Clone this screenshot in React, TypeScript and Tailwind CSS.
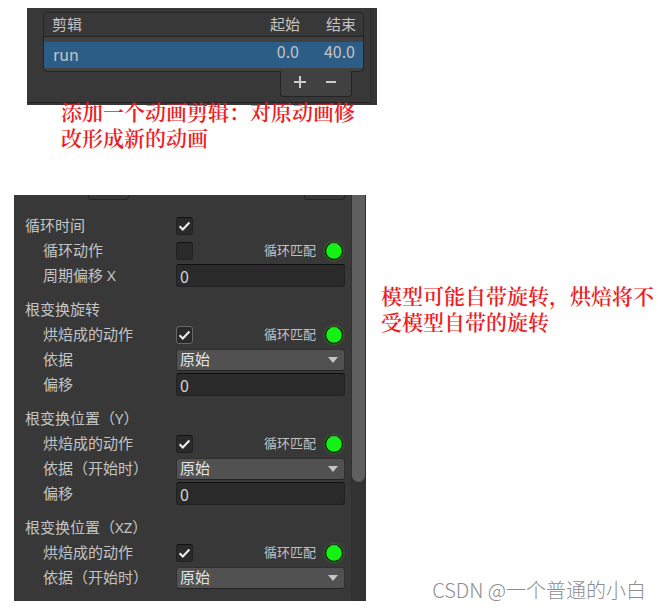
import { ReactNode, useState } from "react";

type CheckProps = { id: string; checked: boolean; focused?: boolean };

const Check = ({ id, checked, focused }: CheckProps) => {
  const [value, setValue] = useState(checked);

  return (
    <span className="grid shrink-0">
      <input
        id={id}
        type="checkbox"
        checked={value}
        onChange={(e) => setValue(e.target.checked)}
        className={`col-start-1 row-start-1 h-[18px] w-[17px] appearance-none rounded-[3px] border bg-[#2a2a2a] ${
          focused ? "border-[#686868]" : "border-[#212121] border-t-[#111111]"
        }`}
      />
      {value && (
        <svg
          viewBox="0 0 17 18"
          className="pointer-events-none col-start-1 row-start-1 h-[18px] w-[17px]"
          fill="none"
          stroke="#eeeeee"
          strokeWidth="2"
        >
          <path d="M3.6 9.3 6.8 12.5 13.4 5.5" />
        </svg>
      )}
    </span>
  );
};

const MatchLight = () => (
  <div className="mr-px ml-auto flex items-center gap-2 text-[13px] text-[#c0c0c0]">
    <span>循环匹配</span>
    <svg viewBox="0 0 20 20" className="size-5 overflow-visible">
      <circle cx="10" cy="10" r="11" fill="#2fd010" opacity="0.08" />
      <circle cx="10" cy="10" r="10" fill="#2fd010" opacity="0.16" />
      <circle cx="10" cy="10" r="9" fill="#0b1f09" />
      <circle cx="10" cy="10" r="7.8" fill="#12f512" />
      <path
        d="M10 4v6L6 14M10 10l4 4M10 12l-2.5 3M10 12l2.5 3"
        stroke="#2bd92b"
        strokeWidth="0.6"
        fill="none"
      />
      <path d="M6 3.2A7.8 7.8 0 0 1 14 3.2" stroke="#6fae6c" strokeWidth="0.8" fill="none" />
    </svg>
  </div>
);

const Row = ({ id, label, children }: { id: string; label: string; children: ReactNode }) => (
  <div className="flex h-[25px] items-center">
    <label htmlFor={id} className="w-[133px] shrink-0 whitespace-nowrap">
      {label}
    </label>
    <div className="flex min-w-0 flex-1 items-center">{children}</div>
  </div>
);

const NumberField = ({ id }: { id: string }) => (
  <input
    id={id}
    type="text"
    defaultValue="0"
    className="h-[23px] w-full rounded-[3px] border border-[#212121] border-t-[#0f0f0f] bg-[#2a2a2a] px-[3px] font-['Noto_Sans_CJK_SC',sans-serif] text-base leading-5 text-[#d2d2d2]"
  />
);

const BasisSelect = ({ id }: { id: string }) => (
  <div className="grid w-full items-center">
    <select
      id={id}
      className="col-start-1 row-start-1 h-[22px] w-full appearance-none rounded-[3px] border border-[#303030] border-b-[#242424] bg-[#515151] px-[3px] pb-px leading-[18px] text-[#e4e4e4]"
    >
      <option>原始</option>
    </select>
    <svg
      viewBox="0 0 10 6"
      className="pointer-events-none col-start-1 row-start-1 mr-[7px] h-[6px] w-[10px] justify-self-end"
    >
      <path d="M0 0h10L5 6z" fill="#c4c4c4" />
    </svg>
  </div>
);

type GroupProps = { id: string; title: string; basis: string; focused?: boolean; offset?: boolean };

const RootGroup = ({ id, title, basis, focused, offset }: GroupProps) => (
  <fieldset>
    <legend className="h-[25px] leading-[25px]">{title}</legend>
    <div className="pl-[18px]">
      <Row id={`${id}-bake`} label="烘焙成的动作">
        <Check id={`${id}-bake`} checked focused={focused} />
        <MatchLight />
      </Row>
      <Row id={`${id}-basis`} label={basis}>
        <BasisSelect id={`${id}-basis`} />
      </Row>
      {offset && (
        <Row id={`${id}-offset`} label="偏移">
          <NumberField id={`${id}-offset`} />
        </Row>
      )}
    </div>
  </fieldset>
);

const ClipList = () => (
  <section className="flex h-[97px] w-full max-w-[350px] bg-[#383838] text-[15px] text-[#c4c4c4]">
    <div className="mb-[2px] flex-1 border-b border-[#222222] pt-1 pr-[6px] pl-4">
      <div className="rounded-[4px] border border-[#242424] bg-[#414141] pb-[3px]">
        <table className="w-full table-fixed border-separate border-spacing-0">
          <thead>
            <tr className="h-6 bg-[#383838] leading-[23px]">
              <th className="rounded-tl-[4px] border-b border-[#242424] p-0 pl-2 text-left font-normal">剪辑</th>
              <th className="w-[62px] border-b border-[#242424] p-0 pr-[7px] text-right font-normal">起始</th>
              <th className="w-[56px] rounded-tr-[4px] border-b border-[#242424] p-0 pr-[7px] text-right font-normal">
                结束
              </th>
            </tr>
          </thead>
          <tbody className="font-['Noto_Sans_CJK_SC',sans-serif] text-base">
            <tr className="h-[31px] bg-[#2c5d87]">
              <td className="border-t-[5px] border-[#414141] p-0 pb-[2px] pl-[9px] leading-6">run</td>
              <td className="border-t-[5px] border-[#414141] p-0 pr-2 pb-2 text-right leading-[18px]">0.0</td>
              <td className="border-t-[5px] border-[#414141] p-0 pr-2 pb-2 text-right leading-[18px]">40.0</td>
            </tr>
          </tbody>
        </table>
      </div>
      <div className="-mt-px mr-3 ml-auto flex h-[26px] w-[72px] items-center justify-center gap-[18px] rounded-b-[4px] border border-t-0 border-[#242424] bg-[#414141] pr-[2px] pb-1">
        <button type="button" aria-label="添加">
          <svg viewBox="0 0 14 14" className="size-[14px]" stroke="#cccccc" strokeWidth="2">
            <path d="M7 1v12M1 7h12" />
          </svg>
        </button>
        <button type="button" aria-label="删除">
          <svg viewBox="0 0 12 14" className="h-[14px] w-3" stroke="#cccccc" strokeWidth="2">
            <path d="M1 7h10" />
          </svg>
        </button>
      </div>
    </div>
    <div className="w-[7px] border-l border-[#2e2e2e] bg-[#343434]" />
  </section>
);

const ClipSettings = () => (
  <section className="flex w-full max-w-[352px] bg-[#383838] text-[15px] text-[#c4c4c4]">
    <div className="min-w-0 flex-1 pr-[6px] pb-[11px] pl-[11px]">
      <div className="mb-[13px] flex justify-between pl-[63px]">
        <div className="h-[5px] w-[41px] rounded-b-[4px] border border-t-0 border-[#242424] bg-[#383838]" />
        <div className="h-[5px] w-[41px] rounded-b-[4px] border border-t-0 border-[#242424] bg-[#383838]" />
      </div>
      <div className="flex flex-col gap-[9px]">
        <div>
          <div className="flex h-[25px] items-center">
            <label htmlFor="loop-time" className="w-[151px] shrink-0">
              循环时间
            </label>
            <Check id="loop-time" checked />
          </div>
          <div className="pl-[18px]">
            <Row id="loop-pose" label="循环动作">
              <Check id="loop-pose" checked={false} />
              <MatchLight />
            </Row>
            <Row id="cycle-offset" label="周期偏移 X">
              <NumberField id="cycle-offset" />
            </Row>
          </div>
        </div>
        <RootGroup id="rotation" title="根变换旋转" basis="依据" focused offset />
        <RootGroup id="position-y" title="根变换位置（Y）" basis="依据（开始时）" offset />
        <RootGroup id="position-xz" title="根变换位置（XZ）" basis="依据（开始时）" />
      </div>
    </div>
    <div className="w-[15px] shrink-0 border-x border-[#303030] bg-[#333333]">
      <div className="h-[287px] rounded-b-[7px] bg-[#5f5f5f]" />
    </div>
  </section>
);

const Note = ({ children }: { children: ReactNode }) => (
  <p className="font-['Noto_Serif_CJK_SC','Noto_Sans_CJK_SC',serif] text-[21px] leading-[26px] font-semibold text-[#ee1c25]">
    {children}
  </p>
);

const App = () => (
  <main className="min-h-screen bg-white pt-2 font-['Noto_Sans','Noto_Sans_CJK_SC',sans-serif]">
    <div className="pl-[27px]">
      <ClipList />
      <div className="-mt-[7px] pl-[34px]">
        <Note>
          添加一个动画剪辑：对原动画修
          <br />
          改形成新的动画
        </Note>
      </div>
    </div>
    <div className="mt-[45px] grid grid-cols-[352px_1fr] gap-[15px] pl-[14px]">
      <ClipSettings />
      <div className="flex flex-col justify-between pt-[87px]">
        <Note>
          模型可能自带旋转，烘焙将不
          <br />
          受模型自带的旋转
        </Note>
        <p className="-mb-[3px] pr-[13px] text-right font-['Noto_Sans_CJK_SC',sans-serif] text-xl leading-7 font-light whitespace-nowrap text-[#8e8e8e]">
          CSDN @一个普通的小白
        </p>
      </div>
    </div>
  </main>
);

export default App;
